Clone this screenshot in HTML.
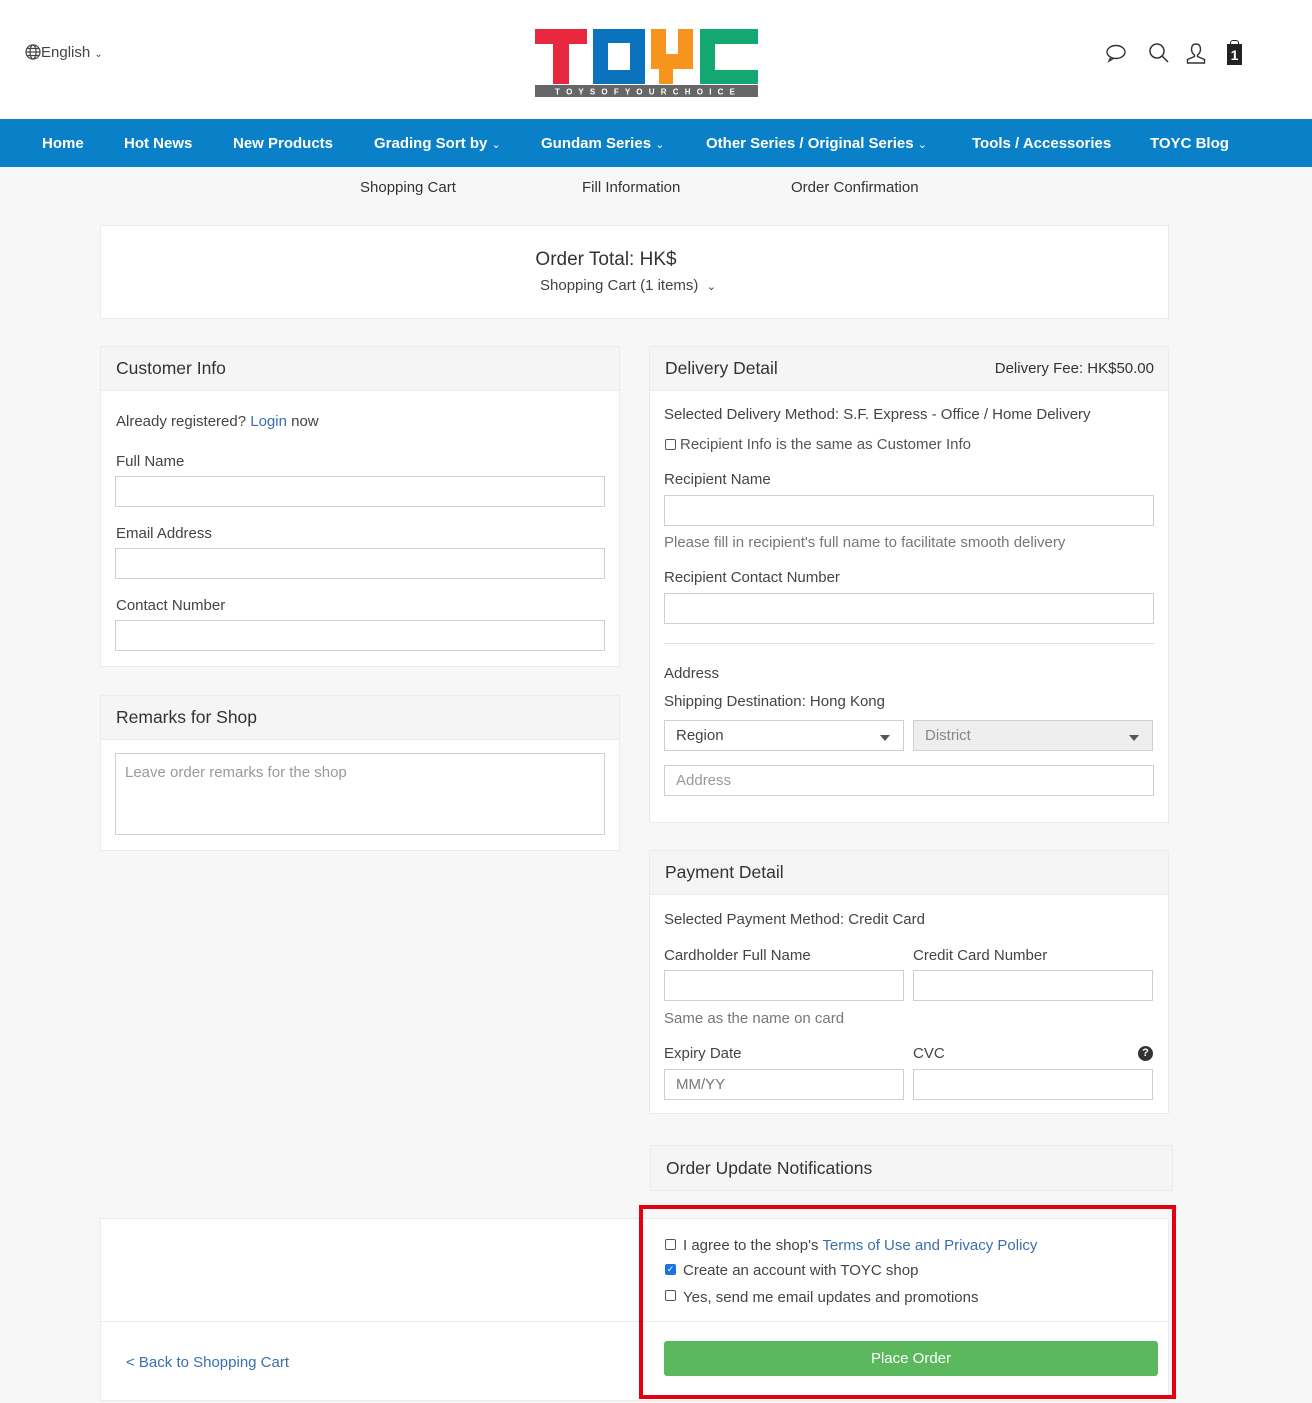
<!DOCTYPE html>
<html><head><meta charset="utf-8"><style>
*{box-sizing:border-box;margin:0;padding:0}
body{width:1312px;height:1403px;background:#f7f7f8;font-family:"Liberation Sans",sans-serif;color:#333;position:relative;overflow:hidden;font-size:15px}
.a{position:absolute}
.hdr{left:0;top:0;width:1312px;height:119px;background:#fff}
.nav{left:0;top:119px;width:1312px;height:48px;background:#0a80c8;color:#fff;font-size:15px;font-weight:bold}
.nav span{position:absolute;top:16px}
.nav i{font-style:normal;font-size:11px;font-weight:normal}
.card{background:#fff;border:1px solid #ebebeb}
.ch{background:#f5f5f5;border-bottom:1px solid #ebebeb;font-size:17.5px;color:#333;padding-left:15px;line-height:43px;height:44px}
.in{position:absolute;background:#fff;border:1px solid #cfcfcf;height:31px;color:#999;padding-left:11px;line-height:30px;font-size:15px}
.lb{position:absolute;font-size:15px;color:#444}
.cb{position:absolute;width:11px;height:11px;border:1px solid #555;border-radius:2px;background:#fff}
.caret{position:absolute;width:0;height:0;border-left:5px solid transparent;border-right:5px solid transparent;border-top:6px solid #555}
.lk{color:#3a6fae}
</style></head><body>
<div class="a hdr"></div>
<div class="a" style="left:25px;top:44px;font-size:15px;color:#444">
<svg width="16" height="16" viewBox="0 0 16 16" style="vertical-align:-3px" fill="none" stroke="#444" stroke-width="1.2"><circle cx="8" cy="8" r="7"/><ellipse cx="8" cy="8" rx="3" ry="7"/><path d="M1 8h14M2 4.5h12M2 11.5h12"/></svg>English <span style="font-size:10px">&#8964;</span></div>
<svg class="a" style="left:533px;top:26px" width="227" height="72" viewBox="0 0 227 72">
<path fill="#e8283f" d="M2 3h52v15H36v40H20V18H2z"/>
<path fill="#0b72bd" fill-rule="evenodd" d="M60 3h52v55H60zM75 17v27h22V17z"/>
<path fill="#f7941d" d="M118 3h15v25h12V3h15v40h-20v15h-14V43h-8z"/>
<path fill="#13a772" d="M167 3h58v15h-43v26h43v14h-58z"/>
<rect x="2" y="59" width="223" height="12" fill="#666"/>
<text x="22" y="68.5" fill="#fff" font-size="8" font-weight="bold" textLength="180" lengthAdjust="spacing" font-family="Liberation Sans">T O Y S   O F   Y O U R   C H O I C E</text>
</svg>
<svg class="a" style="left:1105px;top:42px" width="22" height="22" viewBox="0 0 22 22" fill="none" stroke="#333" stroke-width="1.4"><ellipse cx="11" cy="10" rx="9" ry="6.5"/><path d="M6 15l-2 4 5-3"/></svg>
<svg class="a" style="left:1148px;top:42px" width="22" height="22" viewBox="0 0 22 22" fill="none" stroke="#333" stroke-width="1.5"><circle cx="9" cy="9" r="7"/><path d="M14 14l6 6"/></svg>
<svg class="a" style="left:1185px;top:42px" width="22" height="22" viewBox="0 0 22 22" fill="none" stroke="#333" stroke-width="1.4"><path d="M11 2c3 0 4.5 2 4.5 5s-1.5 5-3 6v1.5l7 3V21H2.5v-3.5l7-3V13c-1.5-1-3-3-3-6s1.5-5 4.5-5z"/></svg>
<div class="a" style="left:1227px;top:44px;width:15px;height:21px;background:#222;color:#fff;font-size:14px;font-weight:bold;text-align:center;line-height:22px">1</div>
<div class="a" style="left:1230px;top:40px;width:9px;height:6px;border:1.5px solid #222;border-bottom:none;border-radius:3px 3px 0 0"></div>
<div class="a nav"><span style="left:42px">Home</span><span style="left:124px">Hot News</span><span style="left:233px">New Products</span><span style="left:374px">Grading Sort by <i>&#8964;</i></span><span style="left:541px">Gundam Series <i>&#8964;</i></span><span style="left:706px">Other Series / Original Series <i>&#8964;</i></span><span style="left:972px">Tools / Accessories</span><span style="left:1150px">TOYC Blog</span></div>
<div class="a" style="left:360px;top:179px">Shopping Cart</div>
<div class="a" style="left:582px;top:179px">Fill Information</div>
<div class="a" style="left:791px;top:179px">Order Confirmation</div>
<div class="a card" style="left:100px;top:225px;width:1069px;height:94px"></div>
<div class="a" style="left:100px;top:249px;width:1012px;text-align:center;font-size:19px;color:#333">Order Total: HK$</div>
<div class="a" style="left:540px;top:277px;color:#444">Shopping Cart (1 items) &nbsp;<span style="font-size:11px">&#8964;</span></div>
<div class="a card" style="left:100px;top:346px;width:520px;height:321px"><div class="ch">Customer Info</div></div>
<div class="lb" style="left:116px;top:413px">Already registered? <span class="lk">Login</span> now</div>
<div class="lb" style="left:116px;top:453px">Full Name</div><div class="in" style="left:115px;top:476px;width:490px"></div>
<div class="lb" style="left:116px;top:525px">Email Address</div><div class="in" style="left:115px;top:548px;width:490px"></div>
<div class="lb" style="left:116px;top:597px">Contact Number</div><div class="in" style="left:115px;top:620px;width:490px"></div>
<div class="a card" style="left:100px;top:695px;width:520px;height:156px"><div class="ch">Remarks for Shop</div></div>
<div class="in" style="left:115px;top:753px;width:490px;height:82px;line-height:38px;padding-left:9px">Leave order remarks for the shop</div>
<div class="a card" style="left:649px;top:346px;width:520px;height:477px"><div class="ch">Delivery Detail<span style="position:absolute;right:14px;font-size:15px">Delivery Fee: HK$50.00</span></div></div>
<div class="lb" style="left:664px;top:406px">Selected Delivery Method: S.F. Express - Office / Home Delivery</div>
<div class="cb" style="left:665px;top:439px"></div><div class="lb" style="left:680px;top:436px;color:#555">Recipient Info is the same as Customer Info</div>
<div class="lb" style="left:664px;top:471px">Recipient Name</div><div class="in" style="left:664px;top:495px;width:490px"></div>
<div class="lb" style="left:664px;top:534px;color:#777">Please fill in recipient's full name to facilitate smooth delivery</div>
<div class="lb" style="left:664px;top:569px">Recipient Contact Number</div><div class="in" style="left:664px;top:593px;width:490px"></div>
<div class="a" style="left:664px;top:643px;width:490px;height:1px;background:#ddd"></div>
<div class="lb" style="left:664px;top:665px">Address</div>
<div class="lb" style="left:664px;top:693px">Shipping Destination: Hong Kong</div>
<div class="in" style="left:664px;top:720px;width:240px;color:#444">Region</div><div class="caret" style="left:880px;top:735px"></div>
<div class="in" style="left:913px;top:720px;width:240px;background:#eee;color:#888">District</div><div class="caret" style="left:1129px;top:735px"></div>
<div class="in" style="left:664px;top:765px;width:490px">Address</div>
<div class="a card" style="left:649px;top:850px;width:520px;height:264px"><div class="ch">Payment Detail</div></div>
<div class="lb" style="left:664px;top:911px">Selected Payment Method: Credit Card</div>
<div class="lb" style="left:664px;top:947px">Cardholder Full Name</div><div class="lb" style="left:913px;top:947px">Credit Card Number</div>
<div class="in" style="left:664px;top:970px;width:240px"></div><div class="in" style="left:913px;top:970px;width:240px"></div>
<div class="lb" style="left:664px;top:1010px;color:#777">Same as the name on card</div>
<div class="lb" style="left:664px;top:1045px">Expiry Date</div><div class="lb" style="left:913px;top:1045px">CVC</div>
<div class="a" style="left:1138px;top:1046px;width:15px;height:15px;border-radius:50%;background:#333;color:#fff;font-size:11px;font-weight:bold;text-align:center;line-height:15px">?</div>
<div class="in" style="left:664px;top:1069px;width:240px;color:#777">MM/YY</div><div class="in" style="left:913px;top:1069px;width:240px"></div>
<div class="a" style="left:650px;top:1145px;width:523px;height:46px;background:#f5f5f5;border:1px solid #ebebeb;font-size:17.5px;padding-left:15px;line-height:44px">Order Update Notifications</div>
<div class="a" style="left:100px;top:1218px;width:1069px;height:183px;background:#fff;border:1px solid #ebebeb"></div>
<div class="a" style="left:100px;top:1321px;width:1069px;height:1px;background:#ebebeb"></div>
<div class="a lk" style="left:126px;top:1354px">&lt; Back to Shopping Cart</div>
<div class="cb" style="left:665px;top:1239px"></div><div class="lb" style="left:683px;top:1237px">I agree to the shop's <span class="lk">Terms of Use and Privacy Policy</span></div>
<div class="cb" style="left:665px;top:1264px;background:#1a73e8;border-color:#1a73e8;color:#fff;font-size:9px;line-height:9px;text-align:center">&#10003;</div><div class="lb" style="left:683px;top:1262px">Create an account with TOYC shop</div>
<div class="cb" style="left:665px;top:1290px"></div><div class="lb" style="left:683px;top:1289px">Yes, send me email updates and promotions</div>
<div class="a" style="left:664px;top:1341px;width:494px;height:35px;background:#5cb85c;border-radius:3px;color:#fff;font-size:15px;text-align:center;line-height:35px">Place Order</div>
<div class="a" style="left:639px;top:1205px;width:537px;height:194px;border:4px solid #e3000f"></div>
</body></html>
